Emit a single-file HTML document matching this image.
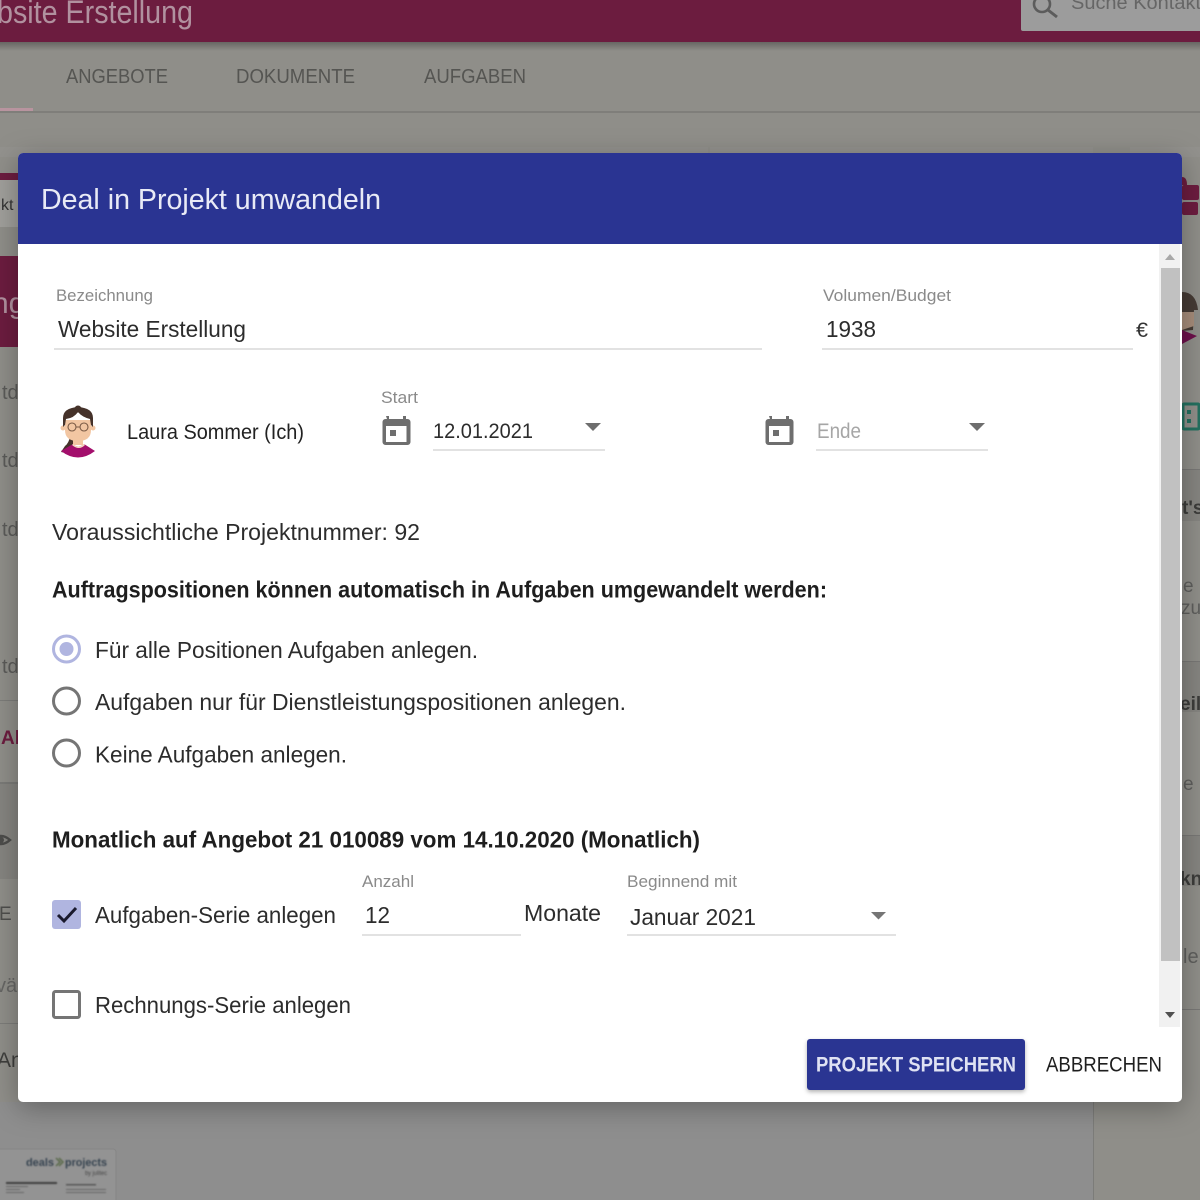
<!DOCTYPE html>
<html lang="de"><head><meta charset="utf-8"><title>Deal in Projekt umwandeln</title>
<style>
html,body{margin:0;padding:0;width:1200px;height:1200px;overflow:hidden;background:#8e8d89}
svg{display:block}
text{font-family:"Liberation Sans",sans-serif;fill:#222}
.l{font-size:17px;fill:#8a8a8a}
.t{font-size:23px;fill:#2c2c2c}
.b{font-size:23px;font-weight:bold;fill:#1e1e1e}
.bg{fill:#555552;font-size:20px}
</style></head><body>
<svg width="1200" height="1200" viewBox="0 0 1200 1200" xmlns="http://www.w3.org/2000/svg">
<defs>
<linearGradient id="sh" x1="0" y1="0" x2="0" y2="1"><stop offset="0" stop-color="#000" stop-opacity=".28"/><stop offset="1" stop-color="#000" stop-opacity="0"/></linearGradient>
<filter id="ms" x="-10%" y="-10%" width="120%" height="120%"><feDropShadow dx="0" dy="6" stdDeviation="14" flood-color="#000" flood-opacity=".3"/></filter>
<filter id="bs" x="-10%" y="-20%" width="120%" height="150%"><feDropShadow dx="0" dy="2" stdDeviation="2" flood-color="#000" flood-opacity=".3"/></filter>
<filter id="soft"><feGaussianBlur stdDeviation=".7"/></filter>
</defs>

<!-- background page -->
<rect width="1200" height="1200" fill="#8f8e89"/>
<rect x="0" y="1102" width="1093" height="98" fill="#8e8e8e"/>
<rect x="1093" y="1102" width="1" height="98" fill="#7c7c79"/>
<rect y="0" width="1200" height="42" fill="#6c1c3f"/>
<rect y="42" width="1200" height="9" fill="url(#sh)"/>
<text x="-3" y="23" textLength="196" lengthAdjust="spacingAndGlyphs" style="font-size:32px;fill:#b1919f">bsite Erstellung</text>
<rect x="1021" y="-4" width="190" height="35" rx="2" fill="#9c9c9c"/>
<circle cx="1042" cy="4" r="8" fill="none" stroke="#5c5c5c" stroke-width="2.6"/>
<path d="M1048 10l9 7" stroke="#5c5c5c" stroke-width="3" fill="none"/>
<text x="1071" y="9" textLength="130" lengthAdjust="spacingAndGlyphs" style="font-size:19px;fill:#666">Suche Kontakt</text>
<text class="bg" x="66" y="83" textLength="102" lengthAdjust="spacingAndGlyphs">ANGEBOTE</text>
<text class="bg" x="236" y="83" textLength="119" lengthAdjust="spacingAndGlyphs">DOKUMENTE</text>
<text class="bg" x="424" y="83" textLength="102" lengthAdjust="spacingAndGlyphs">AUFGABEN</text>
<rect y="111" width="1200" height="2" fill="#7f7e7a"/>
<rect y="108" width="33" height="3" fill="#b8949f"/>
<rect x="0" y="147" width="708" height="10" fill="#92918d"/>
<rect x="710" y="147" width="383" height="10" fill="#92918d"/>
<rect x="1130" y="147" width="70" height="10" fill="#92918d"/>

<!-- left slivers -->
<rect x="0" y="173" width="18" height="7" fill="#6c1c3f"/>
<rect x="0" y="180" width="18" height="47" fill="#a09f9b"/>
<text x="1" y="210" style="font-size:16px;fill:#333">kt</text>
<rect x="0" y="256" width="18" height="91" fill="#6c1c3f"/>
<text x="-8" y="313" style="font-size:30px;fill:#b1919f">ng</text>
<text x="2" y="399" style="font-size:20px;fill:#5a5a58">td</text>
<text x="2" y="467" style="font-size:20px;fill:#5a5a58">td</text>
<text x="2" y="536" style="font-size:20px;fill:#5a5a58">td</text>
<text x="2" y="673" style="font-size:20px;fill:#5a5a58">td</text>
<rect y="700" width="18" height="1" fill="#7c7c79"/>
<text x="1" y="744" style="font-size:19px;font-weight:bold;fill:#6c1c3f">Al</text>
<rect y="782" width="18" height="2" fill="#7a7a77"/>
<rect y="784" width="18" height="95" fill="#858480"/>
<path d="M-8 840q9-8 18 0q-9 8-18 0z" fill="none" stroke="#4c4c4a" stroke-width="2.500"/>
<circle cx="1" cy="840" r="3" fill="#4c4c4a"/>
<text x="-1" y="920" style="font-size:19px;fill:#4e4e4c">E l</text>
<text x="-4" y="992" style="font-size:20px;fill:#666664">väl</text>
<rect y="1023" width="18" height="1" fill="#7c7c79"/>
<text x="-3" y="1067" style="font-size:21px;fill:#3e3e3c">An</text>

<!-- right slivers -->
<rect x="1182" y="185" width="17" height="15" rx="2" fill="#6c1c3f"/>
<rect x="1182" y="202" width="16" height="13" rx="2" fill="#6c1c3f"/>
<path d="M1182 185v-8q5 0 5 8z" fill="#6c1c3f"/>
<path d="M1182 292q14 0 16 18h-4l-1 20-11 1z" fill="#453a34"/>
<path d="M1182 312h12v14l-12 4z" fill="#a68c7a"/>
<path d="M1182 330l15 6-15 8z" fill="#6c0f4a"/>
<rect x="1183" y="404" width="16" height="25" rx="1" fill="none" stroke="#23705f" stroke-width="3"/>
<rect x="1187" y="410" width="4" height="4" fill="#23705f"/><rect x="1187" y="419" width="4" height="4" fill="#23705f"/>
<rect x="1182" y="469" width="18" height="1" fill="#787775"/>
<rect x="1182" y="470" width="18" height="51" fill="#858480"/>
<text x="1182" y="514" style="font-size:19px;font-weight:bold;fill:#3c3c3a">t's</text>
<text x="1183" y="592" style="font-size:19px;fill:#5e5e5c">e</text>
<text x="1181" y="614" style="font-size:19px;fill:#5e5e5c">zu.</text>
<rect x="1182" y="661" width="18" height="1" fill="#787775"/>
<rect x="1182" y="662" width="18" height="50" fill="#858480"/>
<text x="1180" y="710" style="font-size:19px;font-weight:bold;fill:#3c3c3a">eili</text>
<text x="1183" y="790" style="font-size:19px;fill:#5e5e5c">e l</text>
<rect x="1182" y="835" width="18" height="1" fill="#787775"/>
<rect x="1182" y="836" width="18" height="50" fill="#858480"/>
<text x="1180" y="885" style="font-size:19px;font-weight:bold;fill:#3c3c3a">kni</text>
<text x="1183" y="963" style="font-size:20px;fill:#5e5e5c">le</text>
<rect x="1182" y="1009" width="18" height="1" fill="#787775"/>

<!-- thumbnail -->
<rect x="-4" y="1149" width="120" height="60" rx="3" fill="#939393" stroke="#868686"/>
<g filter="url(#soft)">
<text x="26" y="1166" textLength="28" lengthAdjust="spacingAndGlyphs" style="font-size:11px;font-weight:bold;fill:#36424f">deals</text>
<path d="M56 1158l4 4-4 4M59 1158l4 4-4 4" stroke="#5a6b4a" stroke-width="1.500" fill="none"/>
<text x="65" y="1166" textLength="42" lengthAdjust="spacingAndGlyphs" style="font-size:11px;font-weight:bold;fill:#36424f">projects</text>
<text x="85" y="1175" textLength="22" lengthAdjust="spacingAndGlyphs" style="font-size:6px;fill:#444">by julitec</text>
<rect x="6" y="1182" width="51" height="2" fill="#3c3c3c"/>
<rect x="6" y="1186" width="22" height="1" fill="#666"/><rect x="6" y="1189" width="14" height="1" fill="#666"/><rect x="6" y="1192" width="18" height="1" fill="#666"/>
<rect x="66" y="1184" width="30" height="1.500" fill="#555"/><rect x="66" y="1189" width="40" height="1" fill="#666"/><rect x="66" y="1192" width="40" height="1" fill="#666"/>
</g>

<!-- modal -->
<g filter="url(#ms)"><rect x="18" y="153" width="1164" height="949" rx="5" fill="#fff"/></g>
<path d="M18 244V158a5 5 0 0 1 5-5H1177a5 5 0 0 1 5 5V244z" fill="#2a3492"/>
<text x="41" y="209" textLength="340" lengthAdjust="spacingAndGlyphs" style="font-size:29px;fill:#e8eaf6">Deal in Projekt umwandeln</text>

<!-- scrollbar -->
<rect x="1159" y="244" width="21" height="783" fill="#f1f1f1"/>
<rect x="1161" y="268" width="19" height="693" fill="#c1c1c1"/>
<path d="M1165 260l5-6 5 6z" fill="#a8a8a8"/>
<path d="M1165 1012l5 6 5-6z" fill="#505050"/>

<!-- row 1 -->
<text class="l" x="56" y="301" textLength="97" lengthAdjust="spacingAndGlyphs">Bezeichnung</text>
<text class="t" x="58" y="337" textLength="188" lengthAdjust="spacingAndGlyphs">Website Erstellung</text>
<rect x="54" y="348" width="708" height="2" fill="#e2e2e2"/>
<text class="l" x="823" y="301" textLength="128" lengthAdjust="spacingAndGlyphs">Volumen/Budget</text>
<text class="t" x="826" y="337" textLength="50" lengthAdjust="spacingAndGlyphs">1938</text>
<rect x="822" y="348" width="311" height="2" fill="#e2e2e2"/>
<text x="1136" y="337" textLength="12" lengthAdjust="spacingAndGlyphs" style="font-size:21px;fill:#333">€</text>

<!-- avatar -->
<g>
<path d="M70 436q-1 7-5 10l-4 6 5 1 7-6 3-10z" fill="#45322a"/>
<path d="M61 451l12-7q5 5 11 0l11 7q-17 13-34 0z" fill="#a30f6c"/>
<rect x="73" y="436" width="10" height="9" fill="#f2c6a2"/>
<path d="M73 444q5 5 11 0l1 1q-6 6-13 0z" fill="#f7d9bf"/>
<circle cx="63" cy="428" r="2.500" fill="#f2c6a2"/><circle cx="93" cy="428" r="2.500" fill="#f2c6a2"/>
<path d="M65 420h26v10q0 11-13 11t-13-11z" fill="#f2c6a2"/>
<path d="M63 427v-9q0-10 15-11q15 1 15 11v9l-2-2-1-6q-8-2-12-7q-4 6-12 7l-1 6z" fill="#45322a"/>
<circle cx="78" cy="409" r="3.500" fill="#45322a"/>
<circle cx="72" cy="427" r="4" fill="none" stroke="#7a5a45" stroke-width="1.100"/>
<circle cx="84" cy="427" r="4" fill="none" stroke="#7a5a45" stroke-width="1.100"/>
<path d="M76 427h4" stroke="#7a5a45" stroke-width="1"/>
</g>
<text x="127" y="439" textLength="177" lengthAdjust="spacingAndGlyphs" style="font-size:21px;fill:#222">Laura Sommer (Ich)</text>

<!-- dates -->
<text class="l" x="381" y="403" textLength="37" lengthAdjust="spacingAndGlyphs">Start</text>
<g fill="#6e6e6e">
<path fill-rule="evenodd" d="M386 416h3v3h14v-3h3v3h1.500a3 3 0 0 1 3 3v20a3 3 0 0 1-3 3h-22a3 3 0 0 1-3-3v-20a3 3 0 0 1 3-3h1.500zM386 426v16h20.500v-16z"/>
<rect x="390" y="430" width="6" height="6"/>
<path fill-rule="evenodd" d="M769 416h3v3h14v-3h3v3h1.500a3 3 0 0 1 3 3v20a3 3 0 0 1-3 3h-22a3 3 0 0 1-3-3v-20a3 3 0 0 1 3-3h1.500zM769 426v16h20.500v-16z"/>
<rect x="773" y="430" width="6" height="6"/>
</g>
<text class="t" x="433" y="438" textLength="100" lengthAdjust="spacingAndGlyphs" style="font-size:21px">12.01.2021</text>
<rect x="433" y="449" width="172" height="2" fill="#e2e2e2"/>
<path d="M585 423h16l-8 8z" fill="#6e6e6e"/>
<text x="817" y="438" textLength="44" lengthAdjust="spacingAndGlyphs" style="font-size:21px;fill:#a6a6a6">Ende</text>
<rect x="816" y="449" width="172" height="2" fill="#e2e2e2"/>
<path d="M969 423h16l-8 8z" fill="#6e6e6e"/>

<!-- body text -->
<text class="t" x="52" y="540" textLength="368" lengthAdjust="spacingAndGlyphs">Voraussichtliche Projektnummer: 92</text>
<text class="b" x="52" y="597.500" textLength="775" lengthAdjust="spacingAndGlyphs">Auftragspositionen können automatisch in Aufgaben umgewandelt werden:</text>

<circle cx="66.500" cy="649" r="13" fill="none" stroke="#b0b5e0" stroke-width="3"/>
<circle cx="66.500" cy="649" r="7" fill="#b0b5e0"/>
<text class="t" x="95" y="658" textLength="383" lengthAdjust="spacingAndGlyphs">Für alle Positionen Aufgaben anlegen.</text>
<circle cx="66.500" cy="701" r="13" fill="none" stroke="#757575" stroke-width="3"/>
<text class="t" x="95" y="710" textLength="531" lengthAdjust="spacingAndGlyphs">Aufgaben nur für Dienstleistungspositionen anlegen.</text>
<circle cx="66.500" cy="753" r="13" fill="none" stroke="#757575" stroke-width="3"/>
<text class="t" x="95" y="762.500" textLength="252" lengthAdjust="spacingAndGlyphs">Keine Aufgaben anlegen.</text>

<text class="b" x="52" y="847.500" textLength="648" lengthAdjust="spacingAndGlyphs">Monatlich auf Angebot 21 010089 vom 14.10.2020 (Monatlich)</text>

<rect x="52" y="900" width="29" height="29" rx="3" fill="#b0b5e0"/>
<path d="M58 915l6 6 12-13" fill="none" stroke="#1a1a2e" stroke-width="3"/>
<text class="t" x="95" y="923" textLength="241" lengthAdjust="spacingAndGlyphs">Aufgaben-Serie anlegen</text>

<text class="l" x="362" y="887" textLength="52" lengthAdjust="spacingAndGlyphs">Anzahl</text>
<text class="t" x="365" y="923" textLength="25" lengthAdjust="spacingAndGlyphs">12</text>
<rect x="362" y="934" width="159" height="2" fill="#e2e2e2"/>
<text class="t" x="524" y="921" textLength="77" lengthAdjust="spacingAndGlyphs">Monate</text>
<text class="l" x="627" y="887" textLength="110" lengthAdjust="spacingAndGlyphs">Beginnend mit</text>
<text class="t" x="630" y="925" textLength="126" lengthAdjust="spacingAndGlyphs">Januar 2021</text>
<rect x="627" y="934" width="269" height="2" fill="#e2e2e2"/>
<path d="M871 912h15l-7.500 7.500z" fill="#757575"/>

<rect x="53.500" y="991.500" width="26" height="26" rx="2" fill="#fff" stroke="#757575" stroke-width="3"/>
<text class="t" x="95" y="1013" textLength="256" lengthAdjust="spacingAndGlyphs">Rechnungs-Serie anlegen</text>

<!-- buttons -->
<g filter="url(#bs)"><rect x="807" y="1039" width="218" height="51" rx="3" fill="#2a3492"/></g>
<text x="816" y="1071.500" textLength="200" lengthAdjust="spacingAndGlyphs" style="font-size:21px;font-weight:bold;fill:#dfe2f3">PROJEKT SPEICHERN</text>
<text x="1046" y="1071.500" textLength="116" lengthAdjust="spacingAndGlyphs" style="font-size:21px;fill:#1e1e1e">ABBRECHEN</text>
</svg>
</body></html>
